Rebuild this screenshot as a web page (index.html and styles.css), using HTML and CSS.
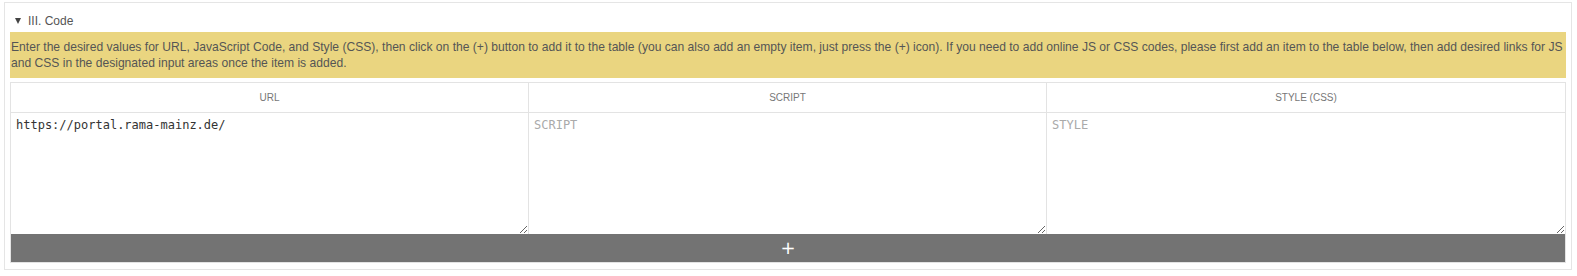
FILE: index.html
```html
<!DOCTYPE html>
<html lang="en">
<head>
    <meta charset="UTF-8">
    <title>Code</title>
    <link rel="stylesheet" href="styles.css">
</head>
<body>
    <div class="panel">
        <div class="panel-title"><span class="caret"></span>III. Code</div>
        <div class="hint">
            Enter the desired values for URL, JavaScript Code, and Style (CSS), then click on the (+) button to add it to the table (you can also add an empty item, just press the (+) icon). If you need to add online JS or CSS codes, please first add an item to the table below, then add desired links for JS and CSS in the designated input areas once the item is added.
        </div>
        <div class="code-table">
            <div class="head">URL</div>
            <div class="head">SCRIPT</div>
            <div class="head">STYLE (CSS)</div>
            <div class="cell"><textarea id="url">https://portal.rama-mainz.de/</textarea></div>
            <div class="cell"><textarea id="script" placeholder="SCRIPT"></textarea></div>
            <div class="cell"><textarea id="style" placeholder="STYLE"></textarea></div>
        </div>
        <button type="button" class="add-btn">+</button>
    </div>
</body>
</html>
```

FILE: styles.css
```css
body {
    margin: 0;
    font-family: "Liberation Sans", Arial, sans-serif;
    background: #fff;
    color: #555;
}
.panel {
    margin: 2px 5px 0 4px;
    border: 1px solid #e5e5e5;
    padding: 0 5px 6px 5px;
}
.panel-title {
    height: 29px;
    box-sizing: border-box;
    padding: 3px 0 0 5px;
    line-height: 30px;
    font-size: 12px;
    color: #555;
}
.caret {
    display: inline-block;
    width: 0;
    height: 0;
    border-left: 3.5px solid transparent;
    border-right: 3.5px solid transparent;
    border-top: 6px solid #444;
    margin-right: 7px;
    vertical-align: 1px;
}
.hint {
    background: #ead580;
    padding: 7px 1px;
    font-size: 12.1px;
    line-height: 16px;
    color: #555;
}
.code-table {
    margin-top: 4px;
    display: grid;
    grid-template-columns: 1fr 1fr 1fr;
    border: 1px solid #e3e3e3;
    border-bottom: none;
}
.head {
    height: 29px;
    line-height: 30px;
    text-align: center;
    font-size: 10px;
    color: #777;
    border-bottom: 1px solid #e3e3e3;
    border-right: 1px solid #e3e3e3;
}
.head:nth-child(3), .cell:nth-child(6) {
    border-right: none;
}
.cell {
    border-right: 1px solid #e3e3e3;
    height: 121px;
}
.cell textarea {
    display: block;
    width: 100%;
    height: 121px;
    box-sizing: border-box;
    border: none;
    outline: none;
    padding: 4px 5px;
    font-family: "DejaVu Sans Mono", monospace;
    font-size: 12px;
    line-height: 16px;
    color: #333;
    resize: both;
}
.cell textarea::placeholder {
    color: #aaa;
}
.add-btn {
    display: block;
    width: 100%;
    height: 29px;
    border: 1px solid #e3e3e3;
    border-top: none;
    background: #737373;
    color: #fff;
    font-family: "DejaVu Sans", sans-serif;
    font-size: 18px;
    line-height: 26px;
    padding: 0;
    cursor: pointer;
}
```
